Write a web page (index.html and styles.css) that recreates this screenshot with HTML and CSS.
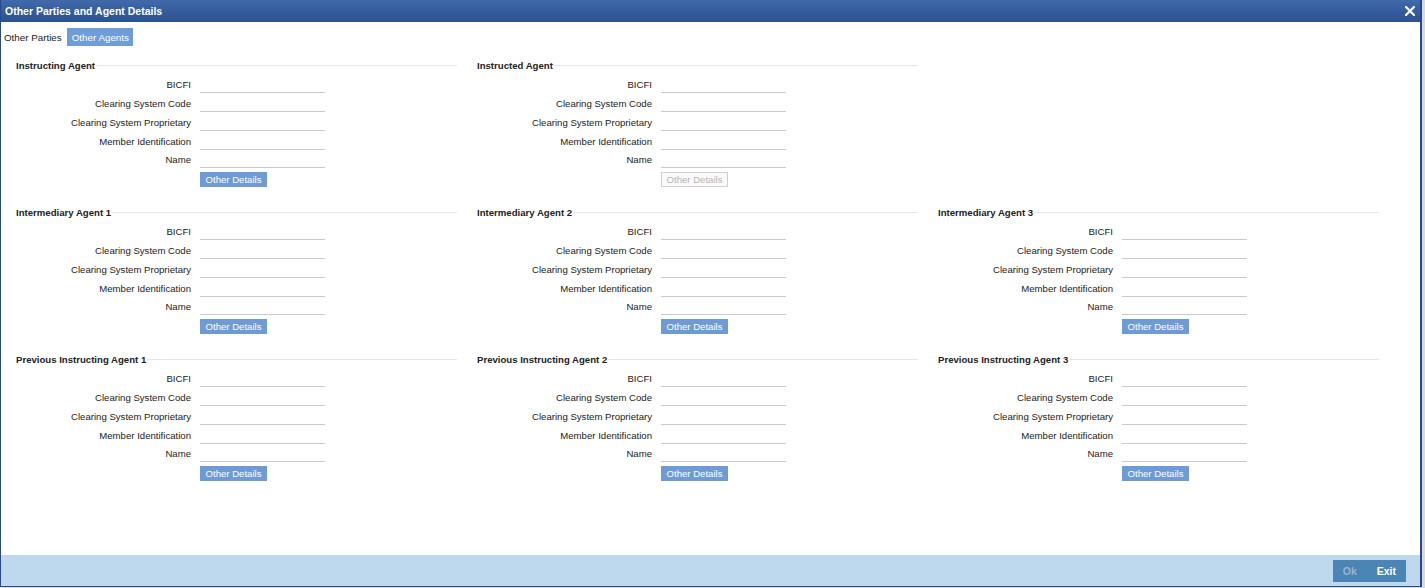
FILE: index.html
```html
<!DOCTYPE html>
<html lang="en">
<head>
  <meta charset="utf-8">
  <title>Other Parties and Agent Details</title>
  <link rel="stylesheet" href="styles.css">
</head>
<body>
  <div class="window">
    <div class="title-bar">
      <span class="title">Other Parties and Agent Details</span>
      <svg class="close" width="10" height="10" viewBox="0 0 10 10">
        <path d="M1 1 L9 9 M9 1 L1 9" stroke="#fff" stroke-width="2.2" stroke-linecap="square"/>
      </svg>
    </div>

    <div class="main">
      <div class="tabs">
        <span class="tab">Other Parties</span>
        <span class="tab active">Other Agents</span>
      </div>

      <div class="agents">
        <!-- row 1 -->
        <div class="agent">
          <div class="agent-title">Instructing Agent</div>
          <div class="field"><label>BICFI</label><input type="text"></div>
          <div class="field"><label>Clearing System Code</label><input type="text"></div>
          <div class="field"><label>Clearing System Proprietary</label><input type="text"></div>
          <div class="field"><label>Member Identification</label><input type="text"></div>
          <div class="field"><label>Name</label><input type="text"></div>
          <button class="details-btn" type="button">Other Details</button>
        </div>
        <div class="agent">
          <div class="agent-title">Instructed Agent</div>
          <div class="field"><label>BICFI</label><input type="text"></div>
          <div class="field"><label>Clearing System Code</label><input type="text"></div>
          <div class="field"><label>Clearing System Proprietary</label><input type="text"></div>
          <div class="field"><label>Member Identification</label><input type="text"></div>
          <div class="field"><label>Name</label><input type="text"></div>
          <button class="details-btn" type="button" disabled>Other Details</button>
        </div>
        <div class="agent empty"></div>

        <!-- row 2 -->
        <div class="agent">
          <div class="agent-title">Intermediary Agent 1</div>
          <div class="field"><label>BICFI</label><input type="text"></div>
          <div class="field"><label>Clearing System Code</label><input type="text"></div>
          <div class="field"><label>Clearing System Proprietary</label><input type="text"></div>
          <div class="field"><label>Member Identification</label><input type="text"></div>
          <div class="field"><label>Name</label><input type="text"></div>
          <button class="details-btn" type="button">Other Details</button>
        </div>
        <div class="agent">
          <div class="agent-title">Intermediary Agent 2</div>
          <div class="field"><label>BICFI</label><input type="text"></div>
          <div class="field"><label>Clearing System Code</label><input type="text"></div>
          <div class="field"><label>Clearing System Proprietary</label><input type="text"></div>
          <div class="field"><label>Member Identification</label><input type="text"></div>
          <div class="field"><label>Name</label><input type="text"></div>
          <button class="details-btn" type="button">Other Details</button>
        </div>
        <div class="agent">
          <div class="agent-title">Intermediary Agent 3</div>
          <div class="field"><label>BICFI</label><input type="text"></div>
          <div class="field"><label>Clearing System Code</label><input type="text"></div>
          <div class="field"><label>Clearing System Proprietary</label><input type="text"></div>
          <div class="field"><label>Member Identification</label><input type="text"></div>
          <div class="field"><label>Name</label><input type="text"></div>
          <button class="details-btn" type="button">Other Details</button>
        </div>

        <!-- row 3 -->
        <div class="agent">
          <div class="agent-title">Previous Instructing Agent 1</div>
          <div class="field"><label>BICFI</label><input type="text"></div>
          <div class="field"><label>Clearing System Code</label><input type="text"></div>
          <div class="field"><label>Clearing System Proprietary</label><input type="text"></div>
          <div class="field"><label>Member Identification</label><input type="text"></div>
          <div class="field"><label>Name</label><input type="text"></div>
          <button class="details-btn" type="button">Other Details</button>
        </div>
        <div class="agent">
          <div class="agent-title">Previous Instructing Agent 2</div>
          <div class="field"><label>BICFI</label><input type="text"></div>
          <div class="field"><label>Clearing System Code</label><input type="text"></div>
          <div class="field"><label>Clearing System Proprietary</label><input type="text"></div>
          <div class="field"><label>Member Identification</label><input type="text"></div>
          <div class="field"><label>Name</label><input type="text"></div>
          <button class="details-btn" type="button">Other Details</button>
        </div>
        <div class="agent">
          <div class="agent-title">Previous Instructing Agent 3</div>
          <div class="field"><label>BICFI</label><input type="text"></div>
          <div class="field"><label>Clearing System Code</label><input type="text"></div>
          <div class="field"><label>Clearing System Proprietary</label><input type="text"></div>
          <div class="field"><label>Member Identification</label><input type="text"></div>
          <div class="field"><label>Name</label><input type="text"></div>
          <button class="details-btn" type="button">Other Details</button>
        </div>
      </div>
    </div>

    <div class="footer">
      <button class="footer-btn" type="button" disabled>Ok</button>
      <button class="footer-btn" type="button">Exit</button>
    </div>
  </div>
</body>
</html>
```

FILE: styles.css
```css
body {
  margin: 0;
  background: #d9d9d9;
  font-family: "Liberation Sans", Arial, sans-serif;
  color: #222;
}
.window {
  box-sizing: border-box;
  width: 1422px;
  height: 587px;
  background: #fff;
  border: 2px solid #25498b;
  border-left-width: 1px;
  border-bottom-width: 1px;
  border-top: none;
  display: flex;
  flex-direction: column;
}
.title-bar {
  height: 22px;
  flex: none;
  display: flex;
  align-items: center;
  justify-content: space-between;
  padding: 0 5px 0 4px;
  background: linear-gradient(#416aab, #2a5190);
}
.title {
  color: #fff;
  font-weight: bold;
  font-size: 10.5px;
}
.close {
  display: block;
}
.main {
  flex: 1;
}
.tabs {
  display: flex;
  margin-top: 6px;
  height: 18px;
}
.tab {
  display: flex;
  align-items: center;
  padding: 0 4px 0 3px;
  font-size: 9.8px;
}
.tab.active {
  margin-left: 1px;
  padding: 0 4px 0 5px;
  background: #6e9dd7;
  color: #fff;
}
.agents {
  display: grid;
  grid-template-columns: repeat(3, 441px);
  column-gap: 20px;
  padding: 12px 0 0 15px;
}
.agent {
  margin-bottom: 18px;
}
.agent-title {
  display: flex;
  align-items: center;
  height: 14px;
  margin-bottom: 3.5px;
  font-weight: bold;
  font-size: 9.6px;
}
.agent-title::after {
  content: "";
  flex: 1;
  height: 1px;
  margin-left: 1px;
  background: #e6e6e6;
}
.field {
  display: grid;
  grid-template-columns: 175px 125px;
  column-gap: 9px;
  align-items: center;
  height: 18.75px;
}
.field label {
  text-align: right;
  font-size: 9.6px;
}
.field input {
  box-sizing: border-box;
  height: 17px;
  padding: 0 2px;
  border: none;
  border-bottom: 1px solid #cacaca;
  background: transparent;
  font-family: inherit;
  font-size: 9.6px;
}
.details-btn {
  display: block;
  margin: 2.75px 0 0 184px;
  width: 67px;
  height: 15px;
  padding: 0;
  border: none;
  background: #6e9bd6;
  color: #fff;
  font-family: inherit;
  font-size: 9.6px;
}
.details-btn:disabled {
  border: 1px solid #cfcfcf;
  background: #fafafa;
  color: #b4b4b4;
}
.footer {
  height: 31px;
  flex: none;
  display: flex;
  justify-content: flex-end;
  align-items: center;
  padding-right: 14px;
  background: #bed9ee;
}
.footer-btn {
  height: 22px;
  padding: 0 10px;
  border: none;
  background: #4a85b5;
  color: #fff;
  font-family: inherit;
  font-weight: bold;
  font-size: 10.5px;
}
.footer-btn:disabled {
  color: #9bb4cb;
}
```
